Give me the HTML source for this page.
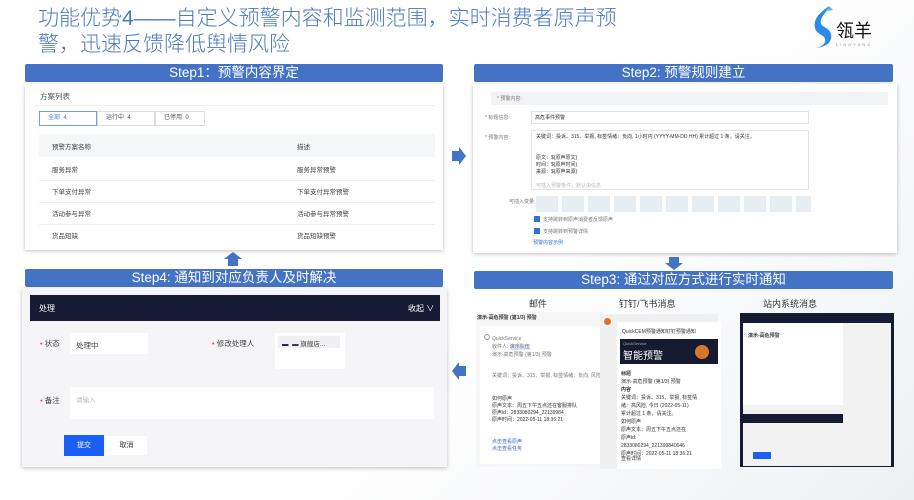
<!DOCTYPE html><html><head><meta charset="utf-8"><style>
*{margin:0;padding:0;box-sizing:border-box}
body{width:914px;height:500px;position:relative;overflow:hidden;background:linear-gradient(135deg,#fff 0%,#fff 55%,#eef0f4 100%);font-family:"Liberation Sans","Noto Sans CJK SC",sans-serif;color:#333}
.a{position:absolute}
.t{color:#4a78c4;font-size:21px;line-height:24px;left:38px;font-weight:300}
.h{background:#4472c4;color:#fff;font-size:13.5px;text-align:center;line-height:18px;border-radius:2px}
.p{background:#fff;box-shadow:0 1px 4px rgba(0,0,0,.25)}
.s{font-size:7.5px;color:#444}
.g{font-size:5px;color:#777}
.ln{border-top:1px solid #eee}
</style></head><body>
<div class="a t" style="top:7px">功能优势4——自定义预警内容和监测范围，实时消费者原声预</div>
<div class="a t" style="top:33px">警，迅速反馈降低舆情风险</div>
<svg class="a" style="left:807px;top:4px" width="30" height="46" viewBox="0 0 30 46"><path d="M22 2C14 8 6 14 8 24c2 8 12 6 10 14-2 5-8 6-12 6 10 0 20-4 18-14-2-8-12-6-10-14 1-5 6-8 8-14z" fill="#2a8ae6"/><path d="M22 2l4 4-6 1z" fill="#55b8f0"/></svg>
<div class="a" style="left:836px;top:17px;font-size:18px;color:#111">瓴羊</div>
<div class="a" style="left:836px;top:42px;font-size:4px;color:#999;letter-spacing:2px">LINGYANG</div>

<div class="a h" style="left:25px;top:64px;width:418px">Step1：预警内容界定</div>
<div class="a h" style="left:474px;top:64px;width:419px">Step2: 预警规则建立</div>
<div class="a h" style="left:25px;top:269px;width:418px">Step4: 通知到对应负责人及时解决</div>
<div class="a h" style="left:474px;top:271px;width:419px">Step3: 通过对应方式进行实时通知</div>

<!-- panel1 -->
<div class="a p" style="left:25px;top:84px;width:418px;height:166px">
<div class="a s" style="left:15px;top:7px;color:#555">方案列表</div>
<div class="a ln" style="left:10px;top:21px;width:400px"></div>
<div class="a" style="left:14px;top:27px;width:58px;height:15px;border:1px solid #6c9ef0;font-size:6px;color:#3d7de8;line-height:13px;padding-left:8px">全部 &nbsp;4</div>
<div class="a" style="left:72px;top:27px;width:58px;height:15px;border:1px solid #ddd;font-size:6px;color:#555;line-height:13px;padding-left:8px">运行中 &nbsp;4</div>
<div class="a" style="left:130px;top:27px;width:50px;height:15px;border:1px solid #ddd;font-size:6px;color:#555;line-height:13px;padding-left:8px">已停用 &nbsp;0</div>
<div class="a" style="left:14px;top:50px;width:396px;height:23px;background:#f5f6f8"></div>
<div class="a s" style="left:27px;top:57px;font-size:6.5px">预警方案名称</div><div class="a s" style="left:272px;top:57px;font-size:6.5px">描述</div>
<div class="a s" style="left:27px;top:80px;font-size:6.5px">服务异常</div><div class="a s" style="left:272px;top:80px;font-size:6.5px">服务异常预警</div>
<div class="a ln" style="left:14px;top:96px;width:396px"></div>
<div class="a s" style="left:27px;top:102px;font-size:6.5px">下单支付异常</div><div class="a s" style="left:272px;top:102px;font-size:6.5px">下单支付异常预警</div>
<div class="a ln" style="left:14px;top:118px;width:396px"></div>
<div class="a s" style="left:27px;top:124px;font-size:6.5px">活动参与异常</div><div class="a s" style="left:272px;top:124px;font-size:6.5px">活动参与异常预警</div>
<div class="a ln" style="left:14px;top:140px;width:396px"></div>
<div class="a s" style="left:27px;top:146px;font-size:6.5px">货品短缺</div><div class="a s" style="left:272px;top:146px;font-size:6.5px">货品短缺预警</div>
</div>

<!-- panel2 -->
<div class="a p" style="left:473px;top:84px;width:424px;height:169px">
<div class="a" style="left:18px;top:8px;width:397px;height:13px;background:#f2f3f5"></div>
<div class="a g" style="left:24px;top:11px">* 预警内容:</div>
<div class="a g" style="left:12px;top:30px">* 标题信息:</div>
<div class="a" style="left:58px;top:27px;width:278px;height:13px;border:1px solid #e4e4e4"></div>
<div class="a g" style="left:62px;top:30px;color:#333">高危事件预警</div>
<div class="a g" style="left:12px;top:50px">* 预警内容:</div>
<div class="a" style="left:58px;top:46px;width:278px;height:60px;border:1px solid #e4e4e4"></div>
<div class="a g" style="left:63px;top:50px;color:#333;line-height:7px;width:270px">关键词：投诉、315、举报, 标签情绪：负向, 1小时内 (YYYY-MM-DD HH) 累计超过 1 条，请关注。<br><br><br>原文：${原声原文}<br>时间：${原声时间}<br>来源：${原声来源}<br><br><span style="color:#bbb">可插入预警条件，默认由信息</span></div>
<div class="a g" style="left:36px;top:114px">可插入变量:</div>
<div class="a" style="left:63px;top:112px;width:275px;height:16px;background:repeating-linear-gradient(90deg,#e8ecf3 0 22px,transparent 22px 26px)"></div>
<div class="a" style="left:61px;top:132px;width:6px;height:6px;background:#3470d9"></div>
<div class="a g" style="left:70px;top:132px">支持跳转到原声消费者反馈原声</div>
<div class="a" style="left:61px;top:144px;width:6px;height:6px;background:#3470d9"></div>
<div class="a g" style="left:70px;top:144px">支持跳转到预警详情</div>
<div class="a g" style="left:60px;top:155px;color:#3470d9">预警内容示例</div>
</div>

<!-- arrows -->
<svg class="a" style="left:452px;top:147px" width="14" height="18"><path d="M0 4h7V0l7 9-7 9v-4H0z" fill="#4472c4"/></svg>
<svg class="a" style="left:452px;top:362px" width="14" height="18"><path d="M14 4H7V0L0 9l7 9v-4h7z" fill="#4472c4"/></svg>
<svg class="a" style="left:224px;top:252px" width="18" height="14"><path d="M4 14V7H0l9-7 9 7h-4v7z" fill="#4472c4"/></svg>
<svg class="a" style="left:665px;top:257px" width="18" height="13"><path d="M4 0v6H0l9 7 9-7h-4V0z" fill="#4472c4"/></svg>

<!-- panel4 -->
<div class="a p" style="left:22px;top:288px;width:425px;height:179px;background:#f5f5f7">
<div class="a" style="left:8px;top:7px;width:410px;height:26px;background:#161b33"></div>
<div class="a" style="left:17px;top:15px;font-size:8px;color:#fff">处理</div>
<div class="a" style="left:386px;top:15px;font-size:8px;color:#fff">收起 ∨</div>
<div class="a s" style="left:18px;top:50px"><span style="color:#e44">•</span> 状态</div>
<div class="a" style="left:48px;top:45px;width:78px;height:21px;background:#fff"></div>
<div class="a s" style="left:54px;top:52px">处理中</div>
<div class="a s" style="left:190px;top:50px"><span style="color:#e44">•</span> 修改处理人</div>
<div class="a" style="left:253px;top:45px;width:70px;height:36px;background:#fff"></div>
<div class="a" style="left:256px;top:48px;width:62px;height:12px;background:#f0f0f2"></div>
<div class="a s" style="left:260px;top:50px;font-size:6.5px"><b style="color:#224">▬</b> &nbsp;<b style="color:#336">▬</b> 旗舰店...</div>
<div class="a s" style="left:18px;top:107px"><span style="color:#e44">•</span> 备注</div>
<div class="a" style="left:48px;top:99px;width:364px;height:32px;background:#fff"></div>
<div class="a" style="left:54px;top:106px;font-size:6.5px;color:#bbb">请输入</div>
<div class="a" style="left:42px;top:147px;width:40px;height:21px;background:#1a5ff5;color:#fff;font-size:7px;text-align:center;line-height:21px">提交</div>
<div class="a" style="left:84px;top:148px;width:41px;height:19px;background:#fff;font-size:7px;text-align:center;line-height:19px">取消</div>
</div>

<!-- panel3 -->
<div class="a" style="left:529px;top:297px;font-size:9px">邮件</div>
<div class="a" style="left:619px;top:297px;font-size:9px">钉钉/飞书消息</div>
<div class="a" style="left:763px;top:297px;font-size:9px">站内系统消息</div>
<div class="a" style="left:476px;top:312px;width:124px;height:155px;background:#f6f6f6"></div>
<div class="a" style="left:477px;top:314px;font-size:5px;font-weight:bold">演示-高危预警 (第1/3) 预警</div>
<div class="a" style="left:480px;top:326px;width:120px;height:138px;background:#fff"></div>
<div class="a" style="left:484px;top:334px;width:6px;height:6px;border-radius:50%;border:1px solid #999"></div>
<div class="a g" style="left:492px;top:335px;line-height:8px">QuickService<br>收件人: <span style="background:#dbe6fa">演示队伍</span><br>演示-高危预警 (第1/3) 预警</div>
<div class="a g" style="left:492px;top:372px">关键词：投诉、315、举报, 标签情绪：负向, 风险等级：高风险</div>
<div class="a g" style="left:492px;top:396px;color:#333;line-height:7px">如何原声<br>原声文本：周五下午五点还在客服排队<br>原声id：2833080294_22139984<br>原声时间：2022-05-11 18:36:21</div>
<div class="a g" style="left:492px;top:439px;color:#3366cc;line-height:7px">点击查看原声<br>点击查看任务</div>
<div class="a" style="left:600px;top:314px;width:118px;height:155px;background:#f0f0f0"></div>
<div class="a" style="left:604px;top:318px;width:7px;height:7px;border-radius:50%;background:#d5772a"></div>
<div class="a" style="left:617px;top:322px;width:104px;height:147px;background:#fff"></div>
<div class="a g" style="left:622px;top:328px;color:#333">QuickCEM预警通知钉钉预警通知</div>
<div class="a" style="left:620px;top:339px;width:98px;height:25px;background:#151a30"></div>
<div class="a" style="left:623px;top:341px;font-size:4px;color:#aaa">QuickService</div>
<div class="a" style="left:623px;top:347px;font-size:10px;color:#fff">智能预警</div>
<div class="a" style="left:695px;top:345px;width:14px;height:14px;border-radius:50%;background:#d5772a"></div>
<div class="a g" style="left:621px;top:370px;color:#333;line-height:8px"><b>标题</b><br>演示-高危预警 (第1/3) 预警<br><b>内容</b><br>关键词：投诉、315、举报, 标签情<br>绪：高风险, 今日 (2022-05-11)<br>累计超过 1 条，请关注。<br>如何原声<br>原声文本：周五下午五点还在<br>原声id:<br>2833080294_221399840046<br>原声时间：2022-05-11 18:36:21</div>
<div class="a g" style="left:621px;top:455px;color:#333">查看详情</div>
<div class="a" style="left:740px;top:313px;width:154px;height:154px;background:#161b33"></div>
<div class="a" style="left:743px;top:323px;width:148px;height:143px;background:#f2f2f2"></div>
<div class="a" style="left:743px;top:323px;width:100px;height:82px;background:#fff"></div>
<div class="a" style="left:748px;top:332px;font-size:5px;font-weight:bold">演示-高危预警</div>
<div class="a" style="left:743px;top:414px;width:100px;height:9px;background:#161b33"></div>
<div class="a" style="left:753px;top:452px;width:18px;height:7px;background:#1a5ff5"></div>
</body></html>
